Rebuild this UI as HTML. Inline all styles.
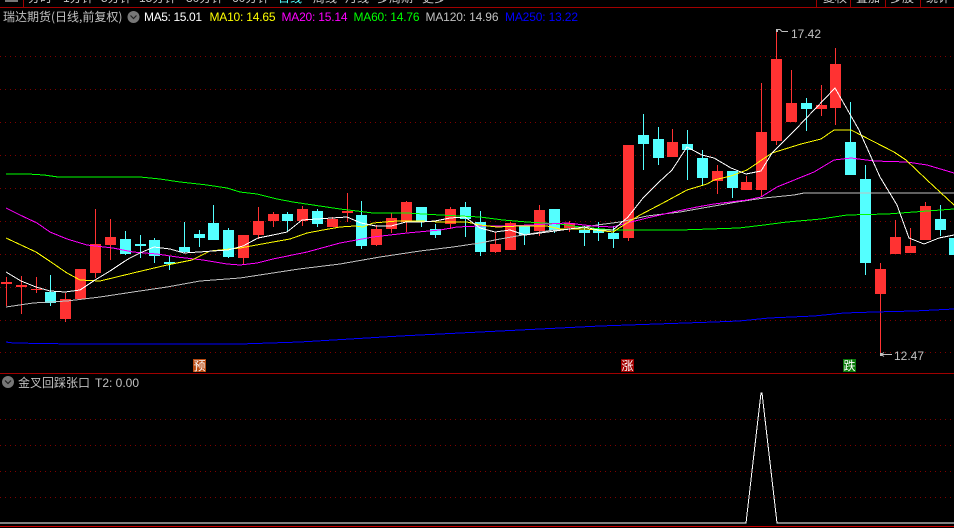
<!DOCTYPE html>
<html><head><meta charset="utf-8"><style>
html,body{margin:0;padding:0;background:#000;width:954px;height:528px;overflow:hidden}
svg{display:block}
text{font-family:"Liberation Sans","WenQuanYi Zen Hei","Noto Sans CJK SC",sans-serif;font-size:12px}
.c{font-family:"WenQuanYi Zen Hei","Noto Sans CJK SC",sans-serif}
.l{fill:none;shape-rendering:crispEdges;stroke-width:1}
</style></head><body>
<svg width="954" height="528" viewBox="0 0 954 528" xmlns="http://www.w3.org/2000/svg">
<rect width="954" height="528" fill="#000"/>
<!-- top clipped tabs -->
<g fill="#c8c8c8" class="c">
<text class="c" x="28" y="2">分时</text><text x="63" y="2">1分钟</text><text x="101" y="2">5分钟</text><text x="139" y="2">15分钟</text><text x="186" y="2">30分钟</text><text x="232" y="2">60分钟</text><text class="c" x="278" y="2" fill="#54ffff">日线</text><text class="c" x="313" y="2">周线</text><text class="c" x="345" y="2">月线</text><text class="c" x="377" y="2">多周期</text><text class="c" x="422" y="2">更多</text>
<text class="c" x="823" y="2">复权</text><text class="c" x="856" y="2">叠加</text><text class="c" x="890" y="2">多股</text><text class="c" x="926" y="2">统计</text>
</g>
<rect x="5" y="0" width="13" height="2" fill="#777"/>
<g shape-rendering="crispEdges">
<rect x="0" y="7" width="954" height="1" fill="#a00000"/>
<rect x="23" y="0" width="1" height="7" fill="#a00000"/>
<rect x="816" y="0" width="1" height="7" fill="#a00000"/>
<rect x="850" y="0" width="1" height="7" fill="#a00000"/>
<rect x="885" y="0" width="1" height="7" fill="#a00000"/>
<rect x="920" y="0" width="1" height="7" fill="#a00000"/>
<rect x="0" y="373" width="954" height="1" fill="#a00000"/>
<rect x="0" y="526" width="954" height="1" fill="#c80000"/>
</g>
<!-- grid -->
<path d="M0 56.5H954M0 89.5H954M0 122.5H954M0 155.5H954M0 188.5H954M0 221.5H954M0 254.5H954M0 287.5H954M0 320.5H954M0 352.5H954M0 419.5H954M0 445.5H954M0 471.5H954M0 497.5H954" stroke="#800000" stroke-width="1" stroke-dasharray="1 4" shape-rendering="crispEdges" fill="none"/>
<!-- red wicks -->
<path shape-rendering="crispEdges" stroke="#ff3232" stroke-width="1" fill="none" d="M6.5 277V306M21.5 276V314M36.5 277V293M65.5 293V322M95.5 209V278M110.5 219V260M243.5 235V264M258.5 207V239M273.5 212V227M302.5 206V226M332.5 217V227M347.5 193V222M376.5 225V246M391.5 213V233M406.5 201V232M450.5 207V229M495.5 232V253M510.5 222V250M539.5 205V236M569.5 221V232M628.5 145V241M672.5 129V157M717.5 165V194M746.5 176V190M761.5 83V196M776.5 29V145M791.5 70V122M821.5 85V116M835.5 48V125M880.5 263V354M895.5 220V254M910.5 228V253M925.5 202V240"/>
<!-- red bodies -->
<path shape-rendering="crispEdges" fill="#ff3232" d="M1 282h11v2h-11zM16 285h11v2h-11zM31 289h11v1h-11zM60 299h11v20h-11zM75 269h11v30h-11zM90 244h11v29h-11zM105 237h11v8h-11zM238 235h11v23h-11zM253 221h11v14h-11zM268 214h11v7h-11zM297 209h11v12h-11zM327 219h11v8h-11zM342 211h11v2h-11zM371 229h11v16h-11zM386 218h11v11h-11zM401 202h11v20h-11zM445 209h11v15h-11zM490 244h11v8h-11zM505 223h11v27h-11zM534 210h11v21h-11zM564 223h11v5h-11zM623 145h11v93h-11zM667 142h11v15h-11zM712 171h11v10h-11zM741 182h11v8h-11zM756 132h11v58h-11zM771 59h11v82h-11zM786 103h11v19h-11zM816 105h11v4h-11zM830 64h11v44h-11zM875 269h11v25h-11zM890 237h11v17h-11zM905 246h11v7h-11zM920 206h11v34h-11z"/>
<!-- cyan wicks -->
<path shape-rendering="crispEdges" stroke="#54ffff" stroke-width="1" fill="none" d="M50.5 275V306M125.5 231V255M140.5 235V258M154.5 238V263M169.5 256V270M184.5 222V253M199.5 230V247M213.5 205V240M228.5 228V258M287.5 212V232M317.5 209V227M361.5 201V249M421.5 207V227M435.5 224V238M465.5 202V237M480.5 211V256M524.5 225V245M554.5 209V233M584.5 226V246M598.5 222V241M613.5 226V248M643.5 114V170M658.5 127V165M687.5 130V180M702.5 150V185M732.5 171V198M806.5 98V131M850.5 102V175M865.5 165V275M940.5 205V236"/>
<!-- cyan bodies -->
<path shape-rendering="crispEdges" fill="#54ffff" d="M45 292h11v11h-11zM120 239h11v15h-11zM135 244h11v2h-11zM149 240h11v16h-11zM164 262h11v2h-11zM179 247h11v5h-11zM194 234h11v4h-11zM208 223h11v17h-11zM223 230h11v27h-11zM282 214h11v7h-11zM312 211h11v13h-11zM356 215h11v31h-11zM416 207h11v14h-11zM430 229h11v6h-11zM460 207h11v12h-11zM475 222h11v30h-11zM519 226h11v9h-11zM549 209h11v21h-11zM579 230h11v3h-11zM593 229h11v4h-11zM608 233h11v6h-11zM638 135h11v9h-11zM653 139h11v19h-11zM682 144h11v6h-11zM697 158h11v20h-11zM727 171h11v17h-11zM801 103h11v6h-11zM845 142h11v33h-11zM860 179h11v84h-11zM935 219h11v11h-11zM949 238h5v17h-5z"/>
<!-- MA lines -->
<polyline class="l" stroke="#0000ff" points="6,342 13,343 73,344 240,344 300,342 400,336 500,331 600,326 714,322 739,321 769,318 814,316 844,313 874,312 914,311 954,309"/>
<polyline class="l" stroke="#00ff00" points="6,174 28,174 44,175 58,177 140,177 160,179 180,182 207,185 227,188 240,192 257,194 277,199 293,202 313,205 340,209 357,211 373,213 407,213 440,215 480,217 503,220 527,222 560,224 580,227 613,230 680,230 710,229 739,228 764,225 787,222 821,219 847,215 887,214 914,212 954,209"/>
<polyline class="l" stroke="#c0c0c0" points="6,307 33,303 67,301 100,297 133,292 167,287 200,281 240,278 299,269 340,264 380,257 420,251 453,247 480,243 500,239 523,235 553,230 573,229 597,225 620,222 647,216 680,212 714,206 737,202 764,198 794,195 804,193 954,193"/>
<polyline class="l" stroke="#ff00ff" points="6,208 20,215 37,223 50,232 67,239 87,245 113,248 133,252 157,254 177,257 203,260 227,264 240,265 257,263 273,259 307,252 340,243 373,237 407,233 440,230 457,227 480,226 507,226 530,225 547,224 567,223 593,226 613,227 627,223 647,218 673,212 697,207 714,204 747,200 761,197 777,187 814,172 834,160 851,158 874,161 907,162 927,165 954,173"/>
<polyline class="l" stroke="#ffff00" points="6,238 21,245 36,252 48,260 67,273 80,280 100,281 133,273 167,265 192,260 210,251 240,248 273,242 290,239 307,233 323,230 340,227 355,226 363,227 373,223 397,221 420,221 440,222 467,222 480,225 497,227 520,226 547,226 560,229 587,229 613,232 627,223 640,215 663,203 687,190 707,184 714,180 731,176 747,170 772,153 801,144 821,139 834,130 851,130 894,152 906,160 927,180 954,205"/>
<polyline class="l" stroke="#ffffff" points="6,272 21,281 36,287 50,291 65,292 80,290 95,280 110,271 125,261 130,258 140,253 154,247 170,249 184,253 199,252 213,251 228,250 243,246 258,238 273,235 287,232 302,220 317,219 332,218 347,217 361,223 376,226 391,226 406,222 421,222 435,221 450,218 465,217 480,228 495,232 510,230 525,235 540,233 555,231 569,229 584,227 598,230 613,230 628,217 643,198 658,183 672,170 687,147 702,155 714,158 731,168 746,174 761,171 772,153 795,130 835,88 859,130 880,177 897,205 909,238 924,244 939,238 954,235"/>
<!-- indicator line -->
<polyline class="l" stroke="#ffffff" points="0,523 746,523 761,393 762,393 777,523 954,523"/>
<!-- labels -->
<text x="3" y="21" fill="#c0c0c0"><tspan class="c">瑞达期货(日线,前复权)</tspan></text>
<circle cx="133.5" cy="17" r="6" fill="#777"/>
<path d="M130.5 15.5l3 3 3-3" stroke="#222" stroke-width="1.2" fill="none"/>
<text x="144" y="21" fill="#fff" textLength="58">MA5: 15.01</text>
<text x="209.5" y="21" fill="#ffff00" textLength="66">MA10: 14.65</text>
<text x="281.5" y="21" fill="#ff00ff" textLength="66">MA20: 15.14</text>
<text x="353.5" y="21" fill="#00ff00" textLength="66">MA60: 14.76</text>
<text x="425.5" y="21" fill="#c0c0c0" textLength="73">MA120: 14.96</text>
<text x="505" y="21" fill="#0000ff" textLength="73">MA250: 13.22</text>
<text x="791" y="38" fill="#c0c0c0" textLength="30">17.42</text>
<path d="M777 29.5h3l2 2h6" stroke="#c0c0c0" fill="none"/>
<rect x="776" y="29" width="2" height="3" fill="#c0c0c0"/>
<text x="894" y="360" fill="#c0c0c0" textLength="30">12.47</text>
<path d="M881 354.5h11M881 354.5l3-2M881 354.5l3 2" stroke="#c0c0c0" fill="none"/>
<rect x="880" y="353" width="2" height="3" fill="#c0c0c0"/>
<rect x="193" y="359" width="13" height="13" fill="#b84a10"/>
<text class="c" x="193.5" y="370" fill="#fff">预</text>
<rect x="621" y="359" width="13" height="13" fill="#a00000"/>
<text class="c" x="621.5" y="370" fill="#fff">涨</text>
<rect x="843" y="359" width="13" height="13" fill="#0a7a0a"/>
<text class="c" x="843.5" y="370" fill="#fff">跌</text>
<circle cx="8" cy="382" r="6" fill="#777"/>
<path d="M5 380.5l3 3 3-3" stroke="#222" stroke-width="1.2" fill="none"/>
<text class="c" x="18" y="387" fill="#c0c0c0">金叉回踩张口</text>
<text x="95" y="387" fill="#c0c0c0" textLength="44">T2: 0.00</text>
</svg>
</body></html>
